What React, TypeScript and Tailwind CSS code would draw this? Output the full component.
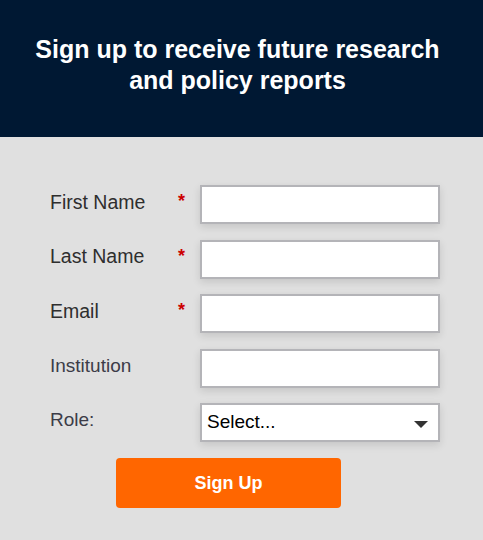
import { useState } from 'react';

interface FieldRow {
  label: string;
  required: boolean;
}

const fields: FieldRow[] = [
  { label: 'First Name', required: true },
  { label: 'Last Name', required: true },
  { label: 'Email', required: true },
  { label: 'Institution', required: false },
];

export default function App() {
  const [role, setRole] = useState('');

  return (
    <div className="w-[483px] h-[540px] bg-[#e0e0e0] font-['Liberation_Sans',Arial,sans-serif]">
      <div className="h-[137px] bg-[#001833] flex items-center justify-center">
        <h1 className="w-[430px] mr-[8px] text-white text-[25px] font-bold leading-[31px] text-center -mt-[8px]">
          Sign up to receive future research and policy reports
        </h1>
      </div>

      <form className="pt-[48px] pl-[50px]" onSubmit={e => e.preventDefault()}>
        <div className="flex flex-col gap-[15.5px]">
          {fields.map(field => (
            <div key={field.label} className="flex items-center h-[39px]">
              <label
                className={`w-[128px] -mt-[4px] ${
                  field.required ? 'text-[19.5px] text-[#2e2e2e]' : 'text-[19px] text-[#3c3c48]'
                }`}
              >
                {field.label}
              </label>
              <span className="w-[22px] text-[#cc0000] text-[18px] font-bold -mt-[6px]">
                {field.required ? '*' : ''}
              </span>
              <input
                type="text"
                className="w-[240px] h-[39px] bg-white border-2 border-[#b4b4b8] shadow-[0_3px_8px_rgba(0,0,0,0.12)] outline-none px-2 text-[19px]"
              />
            </div>
          ))}

          <div className="flex items-center h-[39px]">
            <label className="w-[150px] text-[19px] text-[#3c3c48] -mt-[4px]">Role:</label>
            <div className="relative w-[240px] h-[39px]">
              <select
                value={role}
                onChange={e => setRole(e.target.value)}
                className="appearance-none w-full h-full bg-white border-2 border-[#b4b4b8] shadow-[0_3px_8px_rgba(0,0,0,0.12)] outline-none pl-[5px] text-[19px] text-black"
              >
                <option value="">Select...</option>
                <option value="researcher">Researcher</option>
                <option value="policy">Policy Maker</option>
                <option value="other">Other</option>
              </select>
              <svg
                className="absolute right-[12px] top-[18px] pointer-events-none"
                width="14"
                height="7"
                viewBox="0 0 14 7"
              >
                <path d="M0 0 L14 0 L7 7 Z" fill="#333333" />
              </svg>
            </div>
          </div>
        </div>

        <button
          type="submit"
          className="mt-[16px] ml-[66px] w-[225px] h-[50px] bg-[#ff6600] rounded-[4px] text-white font-bold text-[18px]"
        >
          Sign Up
        </button>
      </form>
    </div>
  );
}
